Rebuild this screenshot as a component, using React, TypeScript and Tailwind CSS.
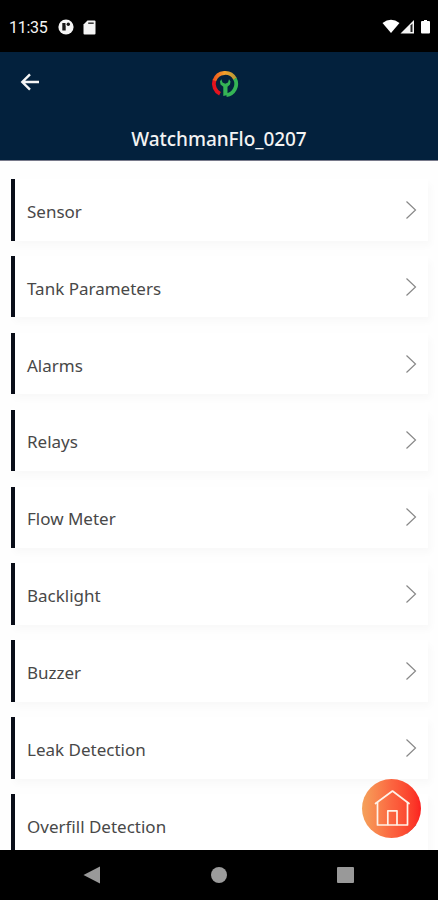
const items: string[] = [
  'Sensor',
  'Tank Parameters',
  'Alarms',
  'Relays',
  'Flow Meter',
  'Backlight',
  'Buzzer',
  'Leak Detection',
  'Overfill Detection',
];

function StatusBar() {
  return (
    <div className="flex h-[52px] shrink-0 items-center bg-black pt-[2px] pl-[9px] pr-[7px] text-white">
      <span className="w-[49px] pt-[1px] font-['Roboto'] text-[16px] leading-none tracking-[-0.3px] text-[#f4f4f4]">11:35</span>
      <svg className="block" width="16" height="16" viewBox="0 0 16 16">
        <circle cx="8" cy="8" r="7.6" fill="#f4f4f4" />
        <path d="M4.3 4h3.4v7.5H4.3z" fill="#151515" />
        <path d="M7.7 3.4h1.4v3.2H7.7z" fill="#f4f4f4" />
        <circle cx="10.3" cy="5.2" r="1.7" fill="#151515" />
      </svg>
      <svg className="ml-[9px] block" width="13" height="15" viewBox="0 0 13 15">
        <path d="M4.5 .5H11.5Q12.5 .5 12.5 1.5V13.5Q12.5 14.5 11.5 14.5H1.5Q.5 14.5 .5 13.5V4.5Z" fill="#f4f4f4" />
        <path d="M5.2 3.2h5.5" stroke="#333" strokeWidth="1.5" />
      </svg>
      <svg className="ml-auto block" width="50" height="16" viewBox="0 0 50 16">
        <path d="M1.500 4Q10 -2.500 18.500 4L10 14Z" fill="#fff" />
        <path d="M19.500 14.500L33 1V14.500Z" fill="#f4f4f4" />
        <path d="M29.500 6.500L31.500 4.500V13H29.500Z" fill="#222" />
        <path d="M41 2H43V1H46V2H48Q49 2 49 3V13.500Q49 14.500 48 14.500H41Q40 14.500 40 13.500V3Q40 2 41 2Z" fill="#fff" />
      </svg>
    </div>
  );
}

function Logo() {
  return (
    <svg className="block" width="28" height="28" viewBox="0 0 28 28">
      <defs>
        <linearGradient id="arc" x1="0" y1="0" x2="1" y2="0">
          <stop offset="0" stopColor="#ee5a1c" />
          <stop offset="0.5" stopColor="#f3a12b" />
          <stop offset="1" stopColor="#b89a35" />
        </linearGradient>
      </defs>
      <g fill="none" strokeWidth="3.800">
        <path d="M9 23.800A11.300 11.300 0 0 1 3.400 10.200" stroke="#e3131e" />
        <path d="M3.400 10.600A11.300 11.300 0 0 1 24.100 9" stroke="url(#arc)" />
        <path d="M23.900 8.700A11.300 11.300 0 0 1 15.400 25.100" stroke="#35b455" />
      </g>
      <path d="M10.300 9.300L9 11.500L9.500 14.500L12.300 16.800V26L16.500 25V16.800L19 14.500L19.500 11.500L18 9.300L17 12.500L14.300 13.800L11.500 12.500Z" fill="#35b455" />
    </svg>
  );
}

function Header() {
  return (
    <header className="h-[109px] shrink-0 border-b border-[#77798a] bg-[#03213d]">
      <div className="grid h-[60px] grid-cols-3 items-center pr-[12px] pl-[20px]">
        <svg className="block" width="20" height="18" viewBox="0 0 20 18" fill="none" stroke="#f5f5f5" strokeWidth="2.400">
          <path d="M19 9H2.500M10 1.300L2.300 9L10 16.700" />
        </svg>
        <div className="flex justify-center pt-[4px] pl-[5px]"><Logo /></div>
      </div>
      <h1 className="pt-[13px] text-center font-['Noto_Sans'] text-[19px] leading-[29px] font-medium tracking-[-0.050px] text-[#f3f3f3]">WatchmanFlo_0207</h1>
    </header>
  );
}

function Row({ label }: { label: string }) {
  return (
    <li className="flex h-[61.500px] shrink-0 items-center border-l-4 border-[#090d18] bg-white pr-[11px] pl-[12px] shadow-[3px_5px_7px_rgba(0,0,0,0.025)]">
      <span className="pt-[4px] font-['Noto_Sans'] text-[17px] leading-[24px] text-[#484848]">{label}</span>
      <svg className="ml-auto block" width="12" height="20" viewBox="0 0 12 20" fill="none" stroke="#888" strokeWidth="1.200">
        <path d="M1.500 1.500L10.500 10L1.500 18.500" />
      </svg>
    </li>
  );
}

function HomeButton() {
  return (
    <button className="absolute top-[779px] left-[362px] flex h-[59px] w-[59px] items-center justify-center rounded-full bg-gradient-to-r from-[#f4a15b] via-[#fb6540] to-[#fb2020]" aria-label="Home">
      <svg className="block" width="40" height="40" viewBox="0 0 40 40" fill="none" stroke="#fff2e8" strokeWidth="1.700" strokeLinejoin="round" strokeLinecap="round">
        <path d="M5.500 13.500V36H35.500V13.500" />
        <path d="M3.500 14.500L20.500 2L37 14.500" />
        <path d="M15.800 35.500V21.800H25V35.500" />
      </svg>
    </button>
  );
}

function NavigationBar() {
  return (
    <nav className="flex h-[50px] shrink-0 items-center bg-black pl-[83px]">
      <svg className="block" width="18" height="18" viewBox="0 0 18 18"><path d="M17 .5V17.500L.5 9Z" fill="#999" /></svg>
      <span className="ml-[110px] h-[16px] w-[16px] rounded-full bg-[#9b9b9b]" />
      <span className="ml-[110px] h-[16px] w-[17px] rounded-[1px] bg-[#999]" />
    </nav>
  );
}

export default function App() {
  return (
    <div className="relative flex h-[900px] w-[438px] flex-col overflow-hidden bg-white">
      <StatusBar />
      <Header />
      <main className="min-h-0 flex-1 overflow-hidden bg-[#fefefe] pt-[18px] pr-[10px] pl-[11px]">
        <ul className="flex flex-col gap-[15.400px]">
          {items.map((label) => <Row key={label} label={label} />)}
        </ul>
      </main>
      <NavigationBar />
      <HomeButton />
    </div>
  );
}
